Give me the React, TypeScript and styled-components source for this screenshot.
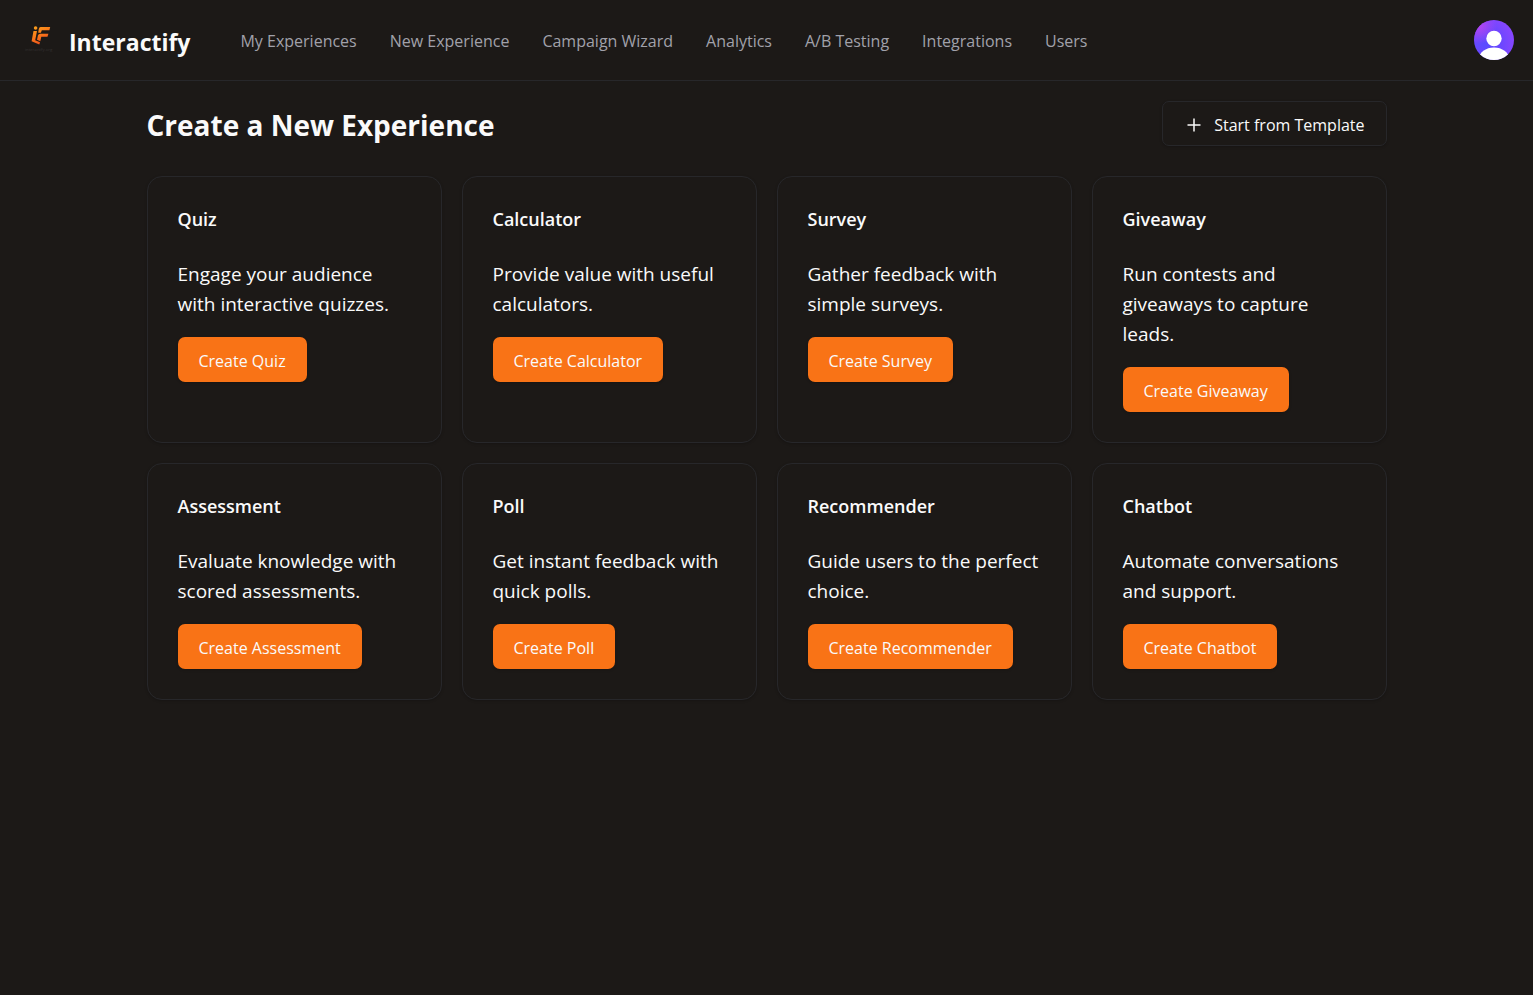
import React from "react";
import styled, { createGlobalStyle } from "styled-components";

const GlobalStyle = createGlobalStyle`
  *, *::before, *::after { box-sizing: border-box; }
  body {
    margin: 0;
    background: #1c1917;
    color: #fafafa;
    font-family: "Segoe UI", "Open Sans", "Noto Sans", sans-serif;
    font-size: 19px;
    line-height: 30px;
  }
`;

const Header = styled.header`
  display: flex;
  align-items: center;
  padding: 20px 19px 20px 20px;
  border-bottom: 1px solid #27272a;
`;

const Brand = styled.a`
  display: flex;
  align-items: center;
  gap: 9px;
  margin-right: 50px;
  color: #fafafa;
  text-decoration: none;
`;

const Wordmark = styled.span`
  padding-top: 4px;
  font-size: 23px;
  font-weight: 700;
  line-height: 36px;
`;

const Nav = styled.nav`
  display: flex;
  flex: 1;
  gap: 33px;
  padding-top: 2px;
`;

const NavLink = styled.a`
  color: #a1a1aa;
  font-size: 16px;
  line-height: 24px;
  text-decoration: none;
  white-space: nowrap;
  &:hover { color: #fafafa; }
`;

const AvatarButton = styled.button`
  display: block;
  width: 40px;
  height: 40px;
  padding: 0;
  border: 0;
  border-radius: 50%;
  overflow: hidden;
  background: none;
  cursor: pointer;
`;

const Main = styled.main`
  max-width: 1280px;
  margin: 0 auto;
  padding: 20px;
`;

const TitleRow = styled.div`
  display: flex;
  align-items: center;
  justify-content: space-between;
  margin-bottom: 30px;
`;

const Title = styled.h1`
  margin: 0;
  padding-top: 2px;
  font-size: 28px;
  font-weight: 700;
  line-height: 42px;
`;

const Button = styled.button<{ $outline?: boolean }>`
  display: inline-flex;
  align-items: center;
  gap: 10px;
  height: 45px;
  padding: 2px 21px 0;
  border: ${(p) => (p.$outline ? "1px solid #27272a" : "0")};
  border-radius: 7px;
  background: ${(p) => (p.$outline ? "#1c1917" : "#f97316")};
  box-shadow: 0 1px 3px rgba(0, 0, 0, 0.2);
  color: #fafafa;
  font-family: inherit;
  font-size: 16px;
  line-height: 24px;
  white-space: nowrap;
  cursor: pointer;
`;

const Grid = styled.div`
  display: grid;
  grid-template-columns: repeat(4, minmax(0, 1fr));
  gap: 20px;
`;

const Card = styled.section`
  padding: 30px;
  border: 1px solid #27272a;
  border-radius: 15px;
  box-shadow: 0 1px 3px rgba(0, 0, 0, 0.2);
`;

const CardTitle = styled.h2`
  margin: 0 0 28px;
  font-size: 18px;
  font-weight: 600;
  line-height: 24px;
`;

const CardText = styled.p`
  margin: 0 0 18px;
`;

const experiences = [
  { name: "Quiz", text: "Engage your audience with interactive quizzes." },
  { name: "Calculator", text: "Provide value with useful calculators." },
  { name: "Survey", text: "Gather feedback with simple surveys." },
  { name: "Giveaway", text: "Run contests and giveaways to capture leads." },
  { name: "Assessment", text: "Evaluate knowledge with scored assessments." },
  { name: "Poll", text: "Get instant feedback with quick polls." },
  { name: "Recommender", text: "Guide users to the perfect choice." },
  { name: "Chatbot", text: "Automate conversations and support." },
];

const links = [
  "My Experiences",
  "New Experience",
  "Campaign Wizard",
  "Analytics",
  "A/B Testing",
  "Integrations",
  "Users",
];

const Logo = () => (
  <svg width="40" height="40" viewBox="0 0 40 40" aria-hidden="true">
    <defs>
      <linearGradient id="flame" x1="12" y1="6" x2="22" y2="25" gradientUnits="userSpaceOnUse">
        <stop offset="0" stopColor="#fba61c" />
        <stop offset="0.55" stopColor="#f9761a" />
        <stop offset="1" stopColor="#ee4a1c" />
      </linearGradient>
    </defs>
    <g fill="url(#flame)">
      <circle cx="15.6" cy="8" r="1.8" />
      <path d="M13.5 11H17L15.2 20.2L20 22.2L19.3 24.4L11.6 21.2Z" />
      <path d="M20.6 7H30.2L29.4 10.2H21.8L20.9 12.8H18.2L18.8 9Q19.1 7 20.6 7Z" />
      <path d="M20.3 13.7H28.4L27.5 16.7H21.3L20.3 21.2L17 19.8L18 15.3Q18.4 13.7 20.3 13.7Z" />
    </g>
    <text x="5" y="31" fill="#353232" fontFamily="Open Sans, sans-serif" fontSize="4.2">
      interactify.org
    </text>
  </svg>
);

const Avatar = () => (
  <svg width="40" height="40" viewBox="0 0 40 40" aria-hidden="true">
    <defs>
      <radialGradient id="halo" cx="0.3" cy="0.6" r="0.75">
        <stop offset="0" stopColor="#5a4bff" />
        <stop offset="0.5" stopColor="#6b47ff" />
        <stop offset="1" stopColor="#8a46ff" />
      </radialGradient>
      <radialGradient id="glow" cx="0.12" cy="0.15" r="0.45">
        <stop offset="0" stopColor="#b545f0" />
        <stop offset="1" stopColor="#b545f0" stopOpacity="0" />
      </radialGradient>
    </defs>
    <rect width="40" height="40" fill="url(#halo)" />
    <rect width="40" height="40" fill="url(#glow)" />
    <circle cx="20" cy="18.5" r="7.7" fill="#fff" />
    <ellipse cx="20" cy="39" rx="15" ry="11.5" fill="#fff" />
  </svg>
);

const Plus = () => (
  <svg width="20" height="20" viewBox="0 0 20 20" fill="none" stroke="#fafafa" strokeWidth="1.5" aria-hidden="true">
    <path d="M3.5 10H16.5M10 3.5V16.5" />
  </svg>
);

export default function App() {
  return (
    <>
      <GlobalStyle />
      <Header>
        <Brand href="#">
          <Logo />
          <Wordmark>Interactify</Wordmark>
        </Brand>
        <Nav>
          {links.map((label) => (
            <NavLink key={label} href="#">
              {label}
            </NavLink>
          ))}
        </Nav>
        <AvatarButton type="button" aria-label="Open user menu">
          <Avatar />
        </AvatarButton>
      </Header>
      <Main>
        <TitleRow>
          <Title>Create a New Experience</Title>
          <Button type="button" $outline>
            <Plus />
            Start from Template
          </Button>
        </TitleRow>
        <Grid>
          {experiences.map(({ name, text }) => (
            <Card key={name}>
              <CardTitle>{name}</CardTitle>
              <CardText>{text}</CardText>
              <Button type="button">Create {name}</Button>
            </Card>
          ))}
        </Grid>
      </Main>
    </>
  );
}
